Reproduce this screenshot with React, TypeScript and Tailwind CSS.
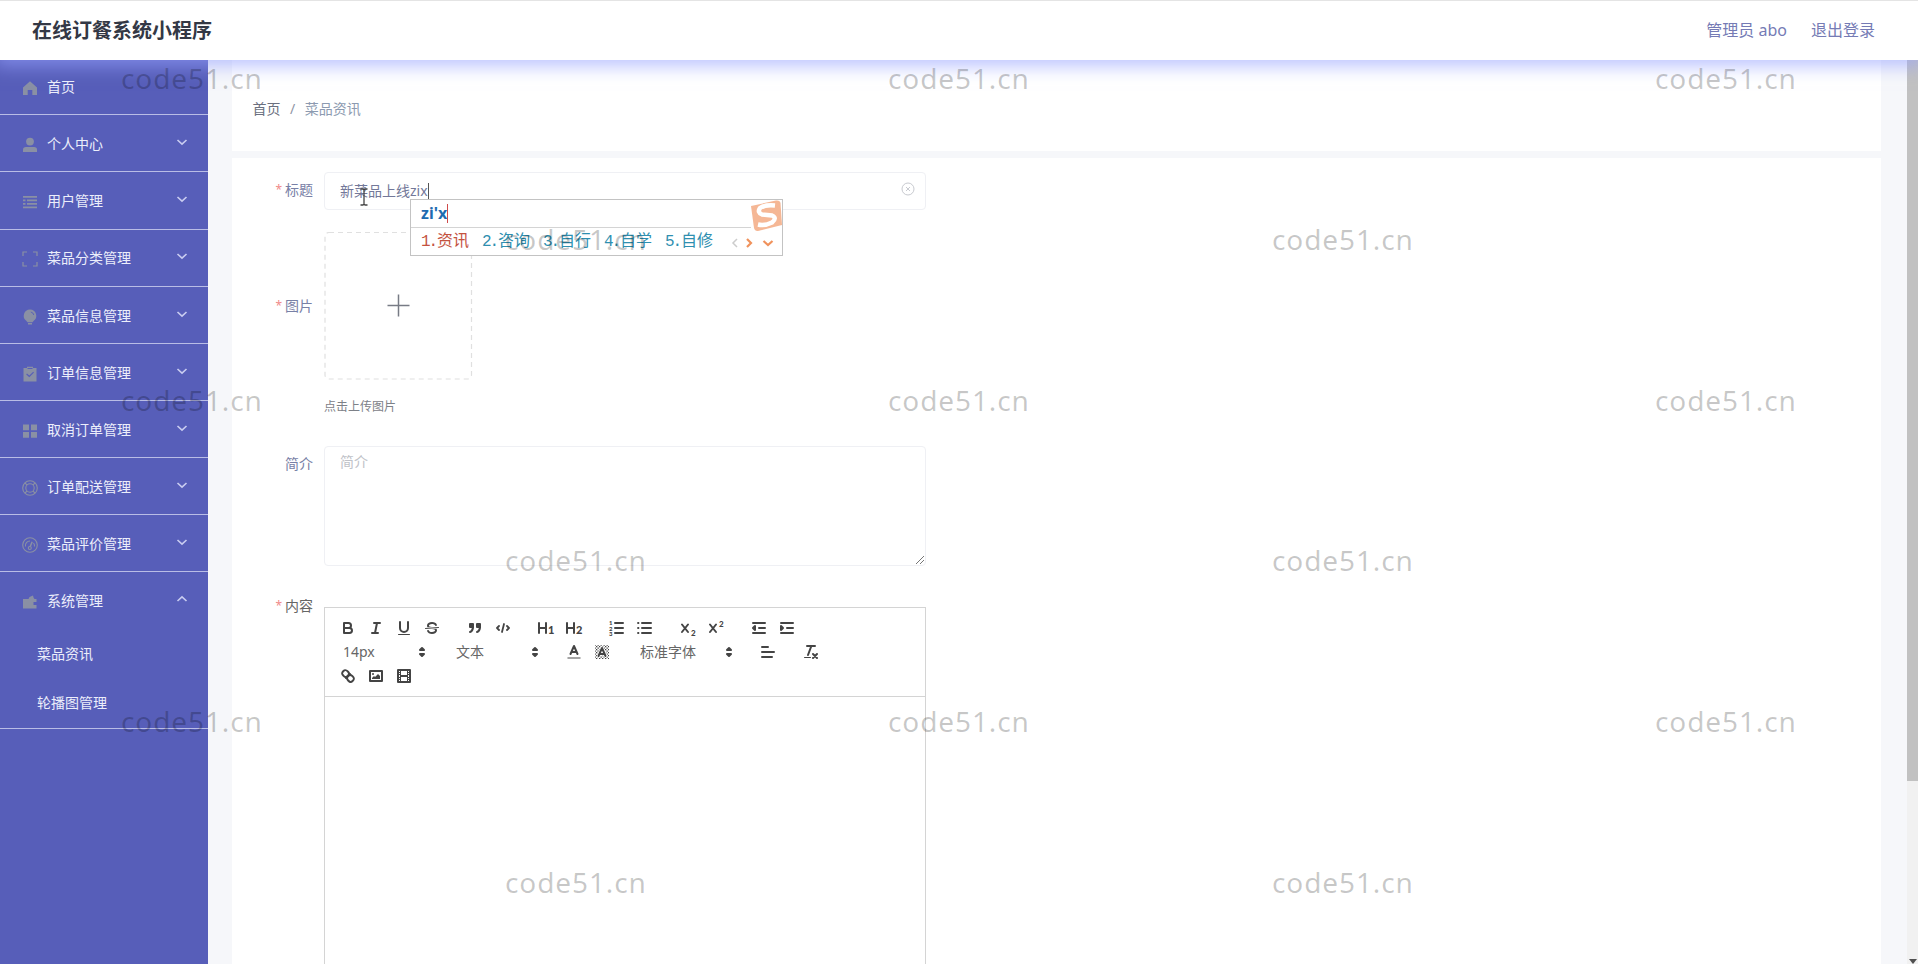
import type { ReactNode } from "react";

const WATERMARK_ROWS = [79, 240, 401, 561, 722, 883];

const MENU: { label: string; icon: ReactNode; arrow?: "down" | "up" }[] = [
  { label: "首页", icon: <path d="M8 1.2 L15 7.500 V15 H10.300 V10 H5.700 V15 H1 V7.500 Z" /> },
  {
    label: "个人中心",
    arrow: "down",
    icon: (
      <>
        <circle cx="8" cy="4.600" r="3.900" />
        <path d="M1 15 V12.500 Q1 10 4 10 H12 Q15 10 15 12.500 V15 Z" />
      </>
    ),
  },
  {
    label: "用户管理",
    arrow: "down",
    icon: <path d="M1 2H15V3.800H1Z M1 5.500H3.500V7.200H1Z M5 5.500H15V7.200H5Z M1 9H3.500V10.700H1Z M5 9H15V10.700H5Z M1 12.500H15V14.200H1Z" />,
  },
  {
    label: "菜品分类管理",
    arrow: "down",
    icon: <path fill="none" stroke="currentColor" strokeWidth="1.200" d="M1 5V1H5 M11 1H15V5 M15 11V15H11 M5 15H1V11" />,
  },
  {
    label: "菜品信息管理",
    arrow: "down",
    icon: (
      <>
        <path d="M8 .5a6.300 6.300 0 0 1 3.500 11.500L10.500 13.200H5.500L4.500 12A6.300 6.300 0 0 1 8 .5Z M6 14H10V15.500H6Z" />
        <path d="M8.800 3a3.800 3.800 0 0 1 3 3" fill="none" stroke="#575eb9" strokeWidth=".9" />
      </>
    ),
  },
  {
    label: "订单信息管理",
    arrow: "down",
    icon: <path fillRule="evenodd" d="M1.500 2H5V.8H11V2H14.500V15.500H1.500Z M5 7.500L4.200 8.400L7.300 11.300L12 6.500L11.200 5.700L7.300 9.600Z M5.500 2V3H10.500V2Z" />,
  },
  { label: "取消订单管理", arrow: "down", icon: <path d="M1 1.500H7V7.200H1Z M9 1.500H15V7.200H9Z M1 9H7V14.700H1Z M9 9H15V14.700H9Z" /> },
  {
    label: "订单配送管理",
    arrow: "down",
    icon: (
      <g fill="none" stroke="currentColor" strokeWidth="1.100">
        <circle cx="8" cy="8" r="7.300" />
        <circle cx="8" cy="8" r="4.200" />
        <path d="M3 3l2.200 2.200M13 3l-2.200 2.200M3 13l2.200-2.200M13 13l-2.200-2.200" />
      </g>
    ),
  },
  {
    label: "菜品评价管理",
    arrow: "down",
    icon: (
      <g fill="none" stroke="currentColor" strokeWidth="1.100">
        <circle cx="8" cy="8" r="7.300" />
        <path d="M3.500 9.500a4.600 4.600 0 0 1 4.500-5.500M12.500 9.500a4.600 4.600 0 0 0-1-3.500" />
        <path d="M10.200 4.800L8.200 9.500" strokeWidth="1.500" />
        <circle cx="7.800" cy="11" r="1.500" />
      </g>
    ),
  },
  {
    label: "系统管理",
    arrow: "up",
    icon: <path d="M1 5H6.500L7.500 3L11 1.500L11.500 3.500L12.500 5H14.500V8H11.500V11H14.500V14.500H1Z" />,
  },
];

function Chevron({ up }: { up?: boolean }) {
  return (
    <svg viewBox="0 0 12 8" className="h-2 w-3" fill="none" stroke="#c9cdf0" strokeWidth="1.600">
      <path d={up ? "M1.500 6L6 1.800L10.500 6" : "M1.500 2L6 6.200L10.500 2"} />
    </svg>
  );
}

function Sidebar() {
  return (
    <aside className="flex w-[208px] shrink-0 flex-col bg-[#575eb9] text-sm text-[#eceefb]">
      {MENU.map((item, i) => (
        <div
          key={item.label}
          className={
            (i === 0 ? "h-[55.300px] " : i === 9 ? "h-[57px] pt-px " : "h-[57.150px] pt-[1.500px] ") +
            (i === 9 ? "" : "border-b border-[#b9bde6] ") +
            "flex shrink-0 items-center pr-5 pl-[22px]"
          }
        >
          <svg viewBox="0 0 16 16" className="mt-0.5 mr-[9px] h-4 w-4 text-[#8a90a4]" fill="currentColor">
            {item.icon}
          </svg>
          <span className="flex-1">{item.label}</span>
          {item.arrow && (
            <span className="mb-1">
              <Chevron up={item.arrow === "up"} />
            </span>
          )}
        </div>
      ))}
      <div className="flex h-[100px] shrink-0 flex-col border-b border-[#b9bde6] pl-[37px]">
        <div className="flex h-[49px] items-center">菜品资讯</div>
        <div className="flex h-[51px] items-center">轮播图管理</div>
      </div>
    </aside>
  );
}

function Tool({ children }: { children: ReactNode }) {
  return (
    <span className="flex h-6 w-7 items-center justify-center">
      <svg viewBox="0 0 18 18" className="h-[18px] w-[18px]" fill="none" stroke="#444" strokeWidth="2" strokeLinecap="round" strokeLinejoin="round">
        {children}
      </svg>
    </span>
  );
}

function Digit({ x, y, size, children }: { x: number; y: number; size: number; children: ReactNode }) {
  return (
    <text x={x} y={y} fontSize={size} fontWeight="900" fill="#444" stroke="none" fontFamily="Lato, sans-serif">
      {children}
    </text>
  );
}

function Picker({ label, wide }: { label: string; wide?: boolean }) {
  return (
    <div className={(wide ? "w-[108px]" : "w-[98px]") + " mr-[15px] flex h-6 items-center justify-between pr-px pl-[9px] text-sm text-[#666]"}>
      <span>{label}</span>
      <svg viewBox="0 0 18 18" className="h-[18px] w-[18px]" fill="#444" stroke="#444" strokeWidth="2" strokeLinejoin="round">
        <polygon points="7 11 9 13 11 11 7 11" />
        <polygon points="7 7 9 5 11 7 7 7" />
      </svg>
    </div>
  );
}

function Group({ children }: { children: ReactNode }) {
  return <div className="mr-[15px] flex">{children}</div>;
}

function Toolbar() {
  return (
    <div className="h-[90px] border border-[#d4d4d4] pt-2 pl-[9px]">
      <div className="flex h-6">
        <Group>
          <Tool>
            <path d="M5,4H9.5A2.5,2.5,0,0,1,9.5,9H5Z" />
            <path d="M5,9h5.5A2.5,2.5,0,0,1,10.5,14H5Z" />
          </Tool>
          <Tool>
            <path d="M7 4H13M5 14H11M8 14L10 4" />
          </Tool>
          <Tool>
            <path d="M5,3V9a4,4,0,0,0,8,0V3" />
            <rect x="3" y="15" width="12" height="1" rx=".5" fill="#444" stroke="none" />
          </Tool>
          <Tool>
            <path d="M15.500 8.500L2.500 9.500" strokeWidth="1" />
            <g fill="#444" stroke="none">
              <path d="M9.007,8C6.542,7.791,6,7.519,6,6.5,6,5.792,7.283,5,9,5c1.571,0,2.765.679,2.969,1.309a1,1,0,0,0,1.9-.617C13.356,4.106,11.354,3,9,3,6.2,3,4,4.538,4,6.5a3.2,3.2,0,0,0,.5,1.843Z" />
              <path d="M8.984,10C11.457,10.208,12,10.479,12,11.5c0,.708-1.283,1.5-3,1.5-1.571,0-2.765-.679-2.969-1.309a1,1,0,1,0-1.9.617C4.644,13.894,6.646,15,9,15c2.8,0,5-1.538,5-3.5a3.2,3.2,0,0,0-.5-1.843Z" />
            </g>
          </Tool>
        </Group>
        <Group>
          <Tool>
            <g fill="#444">
              <rect x="4" y="5" width="3" height="3" />
              <rect x="11" y="5" width="3" height="3" />
              <path d="M7,8c0,4.031-3,5-3,5M14,8c0,4.031-3,5-3,5" />
            </g>
          </Tool>
          <Tool>
            <path d="M5 7L3 9L5 11M13 7L15 9L13 11M10 5L8 13" strokeWidth="1.800" />
          </Tool>
        </Group>
        <Group>
          <Tool>
            <path d="M2 4V14M9 4V14M2 9H9" />
            <Digit x={11} y={15} size={11}>1</Digit>
          </Tool>
          <Tool>
            <path d="M2 4V14M9 4V14M2 9H9" />
            <Digit x={11} y={15} size={11}>2</Digit>
          </Tool>
        </Group>
        <Group>
          <Tool>
            <path d="M7 4H15M7 9H15M7 14H15" />
            <Digit x={1} y={6} size={6}>1</Digit>
            <Digit x={1} y={11.500} size={6}>2</Digit>
            <Digit x={1} y={17} size={6}>3</Digit>
          </Tool>
          <Tool>
            <path d="M6 4H15M6 9H15M6 14H15" />
            <path d="M2 4H2.500M2 9H2.500M2 14H2.500" strokeWidth="1.800" />
          </Tool>
        </Group>
        <Group>
          <Tool>
            <path d="M3 5.500L9 13M9 5.500L3 13" />
            <Digit x={12} y={16.500} size={8}>2</Digit>
          </Tool>
          <Tool>
            <path d="M3 5.500L9 13M9 5.500L3 13" />
            <Digit x={12} y={7.500} size={8}>2</Digit>
          </Tool>
        </Group>
        <Group>
          <Tool>
            <path d="M3 14H15M3 4H15M9 9H15" />
            <polyline points="5 7 5 11 3 9 5 7" fill="#444" />
          </Tool>
          <Tool>
            <path d="M3 14H15M3 4H15M9 9H15" />
            <polyline points="3 7 3 11 5 9 3 7" fill="#444" />
          </Tool>
        </Group>
      </div>
      <div className="flex h-6">
        <Picker label="14px" />
        <Picker label="文本" />
        <Group>
          <Tool>
            <path d="M3 15H15" stroke="#888" strokeWidth="1.500" />
            <path d="M5.500 11L9 3L12.500 11M11.630 9H6.380" />
          </Tool>
          <Tool>
            <defs>
              <pattern id="dither" width="3" height="3" patternUnits="userSpaceOnUse">
                <path d="M0 0H1.300V1.300H0ZM1.500 1.500H2.800V2.800H1.500Z" fill="#444" stroke="none" />
              </pattern>
            </defs>
            <rect x="2" y="2" width="14" height="14" fill="url(#dither)" stroke="none" />
            <path d="M5.500 13L9 5L12.500 13M11.630 11H6.380" stroke="#fff" strokeWidth="3.500" />
            <path d="M5.500 13L9 5L12.500 13M11.630 11H6.380" />
          </Tool>
        </Group>
        <Picker label="标准字体" wide />
        <Group>
          <Tool>
            <path d="M3 9H15M3 14H13M3 4H9" />
          </Tool>
        </Group>
        <Group>
          <Tool>
            <path d="M5 3H13M6 12L9.350 3M11 11L15 15M15 11L11 15" />
            <rect x="2" y="14" width="7" height="1" rx=".5" fill="#444" stroke="none" />
          </Tool>
        </Group>
      </div>
      <div className="flex h-6">
        <Tool>
          <path d="M7 11L11 7" />
          <path d="M8.9,4.577a3.476,3.476,0,0,1,.36,4.679A3.476,3.476,0,0,1,4.577,8.9C3.185,7.5,2.035,6.4,4.217,4.217S7.5,3.185,8.9,4.577Z" />
          <path d="M13.423,9.1a3.476,3.476,0,0,0-4.679-.36,3.476,3.476,0,0,0,.36,4.679c1.392,1.392,2.5,2.542,4.679.36S14.815,10.5,13.423,9.1Z" />
        </Tool>
        <Tool>
          <rect x="3" y="4" width="12" height="10" />
          <circle cx="6" cy="7" r="1" fill="#444" stroke="none" />
          <polyline points="5 12 5 11 7 9 8 10 11 7 13 9 13 12 5 12" fill="#444" stroke="none" />
        </Tool>
        <Tool>
          <rect x="3" y="3" width="12" height="12" />
          <path d="M5 3H6V15H5ZM12 3H13V15H12ZM5 8H13V10H5ZM3 5H6V6H3ZM3 7H6V8H3ZM3 10H6V11H3ZM3 12H6V13H3ZM12 5H15V6H12ZM12 7H15V8H12ZM12 10H15V11H12ZM12 12H15V13H12Z" fill="#444" stroke="none" />
        </Tool>
      </div>
    </div>
  );
}

function Label({ text, required, dark }: { text: string; required?: boolean; dark?: boolean }) {
  return (
    <div className={(dark ? "text-[#666]" : "text-[#7880a6]") + " mr-3 flex h-9 w-[81px] shrink-0 items-center justify-end text-sm"}>
      {required && <span className="mr-[3px] text-[12px] text-[#f08a8a]">*</span>}
      {text}
    </div>
  );
}

function ImePopup() {
  const words = ["资讯", "咨询", "自行", "自学", "自修"];
  return (
    <div className="absolute top-[26px] left-[85px] z-20 h-[57px] w-[373px] border border-[#c3c3c3] bg-white">
      <div className="mr-[31px] flex h-7 items-center border-b border-[#d4d4d4] pl-[10px]">
        <span className="text-[16px] font-bold text-[#1e6bb0]">zi'x</span>
        <span className="h-[19px] w-px bg-[#d04a4a]" />
      </div>
      <div className="flex h-[29px] items-center pl-[10px] font-['Liberation_Mono','Noto_Sans_CJK_SC',monospace] text-[16px]">
        {words.map((w, i) => (
          <span key={w} className={(i === 0 ? "text-[#c4523f]" : "text-[#2f8fb0]") + " flex w-[61px] shrink-0"}>
            <span className="w-4 tracking-[-2px]">{i + 1}.</span>
            <span>{w}</span>
          </span>
        ))}
        <svg viewBox="0 0 46 12" className="ml-[3px] h-3 w-[46px] shrink-0" fill="none" strokeWidth="2.200">
          <path d="M8 2L4 6L8 10" stroke="#ccc" strokeWidth="1.500" />
          <path d="M18 2L22 6L18 10" stroke="#f0925c" />
          <path d="M34.500 4L39 8L43.500 4" stroke="#f0925c" />
        </svg>
      </div>
      <svg viewBox="0 0 32 32" className="absolute top-0 right-0 h-8 w-8">
        <path d="M1 6L26 .5Q30 0 30.500 3L32 25L8 31Q5 31.500 4 28Z" fill="#f5b795" />
        <path d="M25 5.500Q15 4.500 10 8Q7 12.500 12 14.500L22 15.500Q27.500 18 22 22.500Q15 26 8 24.500" fill="none" stroke="#fff" strokeWidth="4.500" />
      </svg>
    </div>
  );
}

function Form() {
  return (
    <div className="flex-1 bg-white pt-[14px]">
      <div className="flex">
        <Label text="标题" required />
        <div className="relative -ml-px flex h-[38px] w-[602px] items-center rounded border border-[#eff0f4] pl-[15px] text-sm text-[#737899]">
          <span>新菜品上线zix</span>
          <span className="h-4 w-px bg-[#555]" />
          <svg viewBox="0 0 14 14" className="mr-[10px] mb-1 ml-auto h-3.5 w-3.5" fill="none" stroke="#c8cad0">
            <circle cx="7" cy="7" r="6" />
            <path d="M5 5L9 9M9 5L5 9" />
          </svg>
          <svg viewBox="0 0 10 18" className="absolute top-[15px] left-[34px] h-[18px] w-[10px]" fill="none" stroke="#444" strokeWidth="1.300">
            <path d="M1.500 1H4L5 2L6 1H8.500M5 2V16M1.500 17H4L5 16L6 17H8.500" />
          </svg>
          <ImePopup />
        </div>
      </div>
      <div className="mt-[22px] flex items-start">
        <div className="pt-14">
          <Label text="图片" required />
        </div>
        <div className="-ml-px">
          <svg viewBox="0 0 149 149" className="h-[149px] w-[149px]" fill="none">
            <rect x="1" y=".5" width="146.500" height="146.500" rx="4" stroke="#e0e0e0" strokeWidth="1.200" strokeDasharray="5 4" />
            <path d="M74.500 62.500V84.500M63.500 73.500H85.500" stroke="#777b85" strokeWidth="1.500" />
          </svg>
          <div className="mt-[17px] h-[18px] text-xs leading-[18px] text-[#7d8188]">点击上传图片</div>
        </div>
      </div>
      <div className="mt-[30px] flex">
        <Label text="简介" />
        <div className="relative -ml-px h-[120px] w-[602px] rounded border border-[#eff0f4] px-[15px] pt-[5px] text-sm text-[#c0c2c8]">
          简介
          <svg viewBox="0 0 10 10" className="absolute right-0 bottom-0 h-2.5 w-2.5" stroke="#777">
            <path d="M1 9L9 1M5 9L9 5" />
          </svg>
        </div>
      </div>
      <div className="mt-[22px] flex">
        <Label text="内容" required dark />
        <div className="mt-[19px] -ml-px w-[602px]">
          <Toolbar />
          <div className="h-[300px] border border-t-0 border-[#d4d4d4]" />
        </div>
      </div>
    </div>
  );
}

function Watermarks() {
  return (
    <div className="pointer-events-none absolute inset-0 z-30 overflow-hidden text-[28px] leading-[40px] tracking-[0.900px] text-[#000]/22">
      {WATERMARK_ROWS.map((y, r) =>
        (r % 2 ? [505, 1272] : [121, 888, 1655]).map((x) => (
          <span key={x + "-" + y} className="absolute" style={{ left: x, top: y - 21.500 }}>
            code51.cn
          </span>
        )),
      )}
    </div>
  );
}

export default function App() {
  return (
    <div className="relative flex h-[964px] w-full flex-col overflow-hidden bg-[#f6f7fa] font-['Noto_Sans','Noto_Sans_CJK_SC',sans-serif]">
      <header className="relative z-10 flex h-[60px] shrink-0 items-center justify-between border-t border-[#e4e4e4] bg-white pr-[43px] pl-8 shadow-[0_2px_16px_5px_rgba(150,162,255,0.600)]">
        <h1 className="text-[20px] font-bold text-[#333845]">在线订餐系统小程序</h1>
        <div className="mb-0.5 flex gap-6 text-base text-[#757bb5]">
          <span>管理员 abo</span>
          <span>退出登录</span>
        </div>
      </header>
      <div className="flex min-h-0 flex-1">
        <Sidebar />
        <main className="flex min-w-0 flex-1 flex-col overflow-hidden pr-[26px] pl-6">
          <nav className="mb-[7px] flex h-[91px] shrink-0 items-center gap-[9.500px] bg-white pl-[20.500px] text-sm">
            <span className="mt-[7px] text-[#6b7080]">首页</span>
            <span className="mt-[7px] text-[#8f95a5]">/</span>
            <span className="mt-[7px] text-[#8c9ab0]">菜品资讯</span>
          </nav>
          <Form />
        </main>
        <div className="flex w-[11px] shrink-0 flex-col items-center bg-[#f1f1f1]">
          <div className="h-[721px] w-full bg-[#c1c1c1]" />
          <svg viewBox="0 0 8 5" className="mt-auto h-[5px] w-2" fill="#505050">
            <path d="M0 0H8L4 5Z" />
          </svg>
        </div>
      </div>
      <Watermarks />
    </div>
  );
}
